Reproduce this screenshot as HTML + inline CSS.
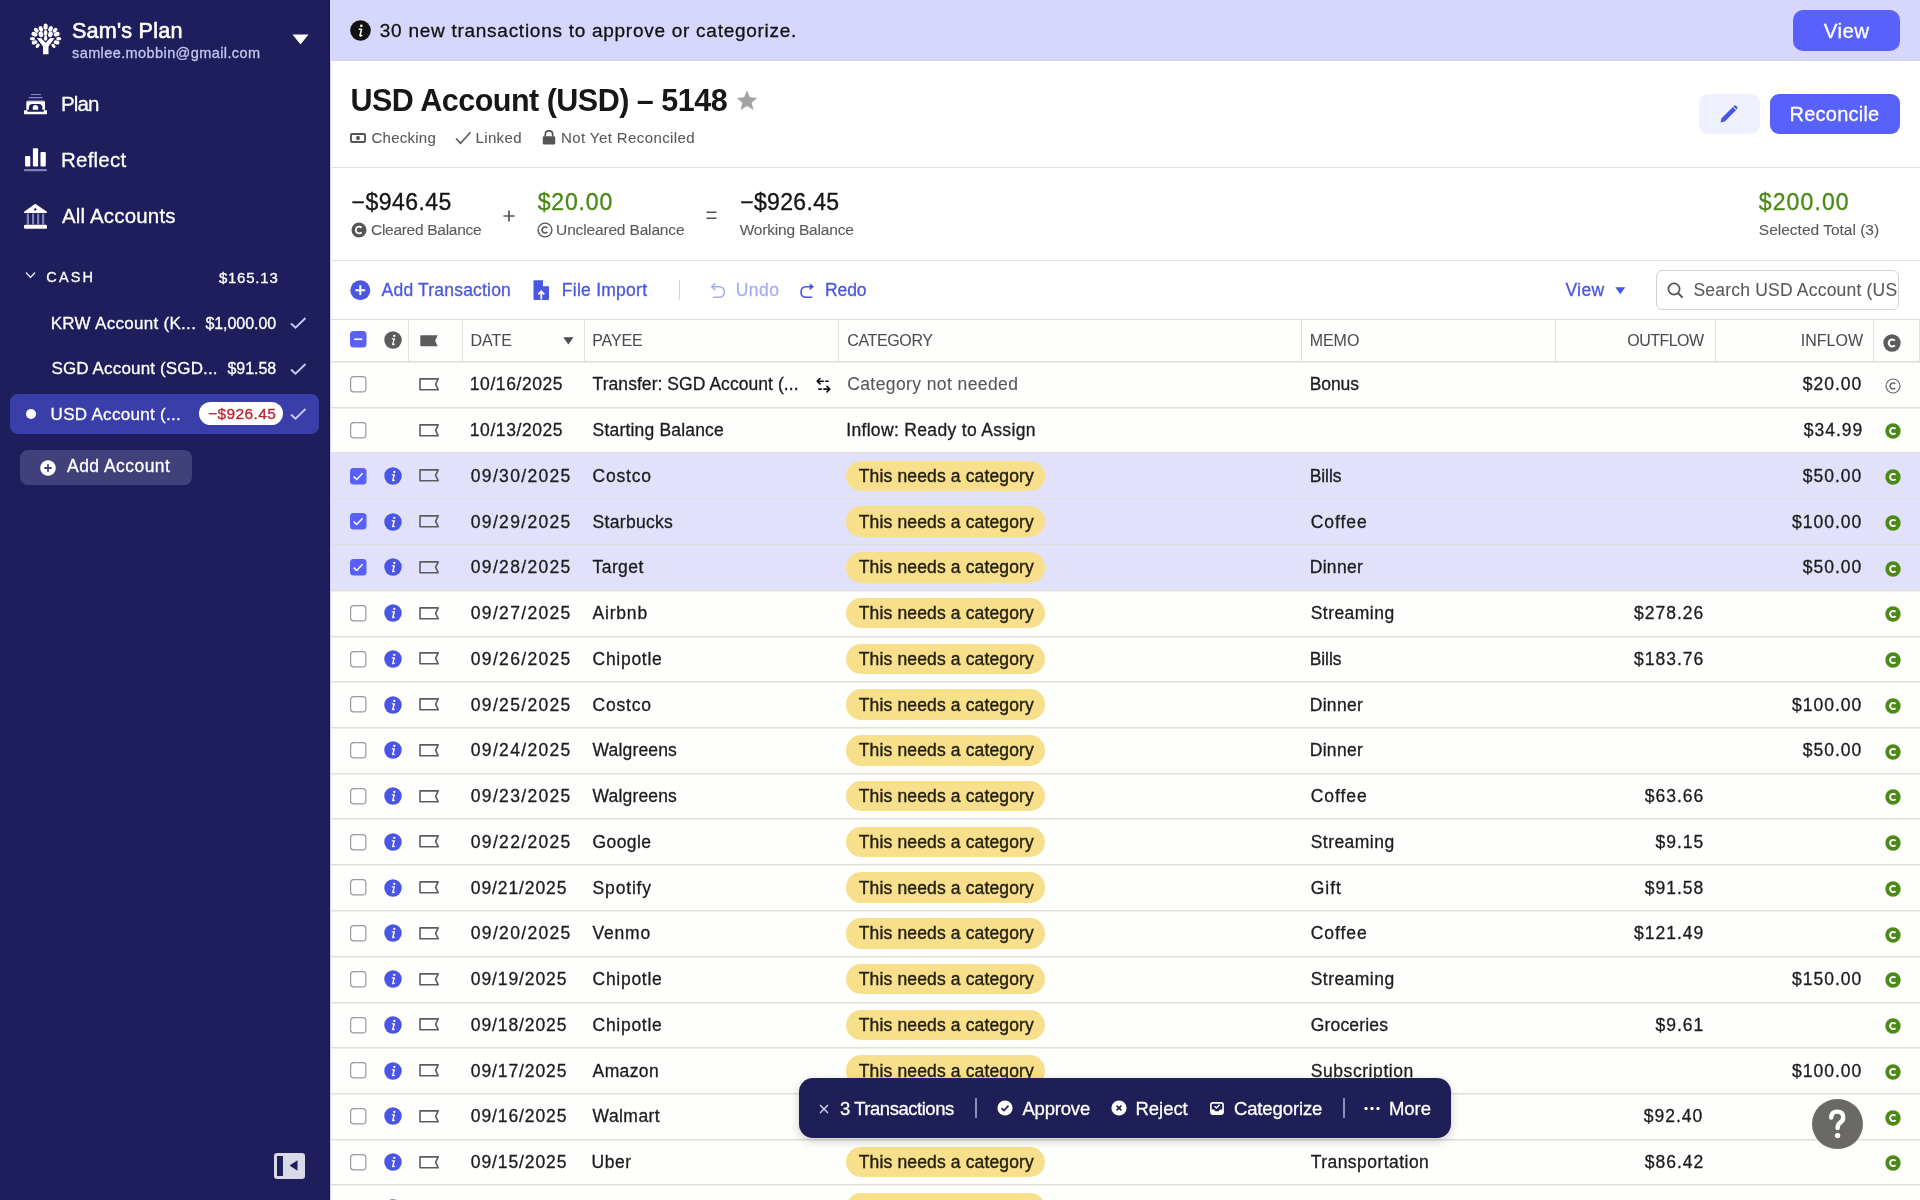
<!DOCTYPE html>
<html><head><meta charset="utf-8"><style>
*{box-sizing:border-box;margin:0;padding:0}
html,body{width:1920px;height:1200px;overflow:hidden;background:#fff;font-family:"Liberation Sans", sans-serif}
.t{position:absolute;white-space:nowrap;line-height:1;-webkit-text-stroke-width:0.3px}
.a{position:absolute}
svg{position:absolute;overflow:visible}

</style></head><body><div id="root" style="position:absolute;left:0;top:0;width:1920px;height:1200px;overflow:hidden;will-change:transform">
<div class="a" style="left:0;top:0;width:330px;height:1200px;background:#1d1e5b"></div><div class="a" style="left:329px;top:0;width:1px;height:1200px;background:#15164a"></div><svg style="left:26px;top:20px" width="40" height="38" viewBox="0 0 40 38"><ellipse cx="19.6" cy="6.6" rx="2.1" ry="3.2" transform="rotate(0 19.6 6.6)" fill="#fff"/><ellipse cx="14.9" cy="8.9" rx="2.0" ry="3.0" transform="rotate(-25 14.9 8.9)" fill="#fff"/><ellipse cx="24.5" cy="8.9" rx="2.0" ry="3.0" transform="rotate(25 24.5 8.9)" fill="#fff"/><ellipse cx="10.3" cy="10.3" rx="1.9" ry="2.8" transform="rotate(-50 10.3 10.3)" fill="#fff"/><ellipse cx="29" cy="10.3" rx="1.9" ry="2.8" transform="rotate(50 29 10.3)" fill="#fff"/><ellipse cx="8.5" cy="14.3" rx="3.1" ry="2.2" transform="rotate(20 8.5 14.3)" fill="#fff"/><ellipse cx="14.9" cy="14.3" rx="2.3" ry="3.0" transform="rotate(-15 14.9 14.3)" fill="#fff"/><ellipse cx="19.6" cy="13" rx="1.8" ry="2.9" transform="rotate(0 19.6 13)" fill="#fff"/><ellipse cx="24.4" cy="14.3" rx="2.3" ry="3.0" transform="rotate(15 24.4 14.3)" fill="#fff"/><ellipse cx="30.7" cy="14.3" rx="3.1" ry="2.2" transform="rotate(-20 30.7 14.3)" fill="#fff"/><ellipse cx="19.6" cy="18.2" rx="1.7" ry="2.6" transform="rotate(0 19.6 18.2)" fill="#fff"/><ellipse cx="6.5" cy="18.7" rx="2.6" ry="1.8" transform="rotate(0 6.5 18.7)" fill="#fff"/><ellipse cx="32.7" cy="18.7" rx="2.6" ry="1.8" transform="rotate(0 32.7 18.7)" fill="#fff"/><ellipse cx="8.6" cy="22.4" rx="2.9" ry="2.0" transform="rotate(-20 8.6 22.4)" fill="#fff"/><ellipse cx="30.6" cy="22.4" rx="2.9" ry="2.0" transform="rotate(20 30.6 22.4)" fill="#fff"/><ellipse cx="11.7" cy="25.8" rx="1.6" ry="2.5" transform="rotate(40 11.7 25.8)" fill="#fff"/><ellipse cx="27.5" cy="25.8" rx="1.6" ry="2.5" transform="rotate(-40 27.5 25.8)" fill="#fff"/><polygon points="10.8,18 15,18 19.6,22.8 24.2,18 28.6,18 22.5,26.5 22.5,34.2 17,34.2 17,26.5" fill="#fff"/></svg><div class="t" style="top:20.11px;font-size:21.6px;color:#fff;letter-spacing:0.208px;left:72.00px;-webkit-text-stroke:0.6px #fff;">Sam&#x27;s Plan</div><div class="t" style="top:45.62px;font-size:14.5px;color:#c5c6ee;letter-spacing:0.407px;left:72.00px;">samlee.mobbin@gmail.com</div><svg style="left:292px;top:34px" width="18" height="11" viewBox="0 0 18 11"><polygon points="0.5,0.5 16.5,0.5 8.5,10.5" fill="#fff"/></svg><svg style="left:20px;top:90px" width="30" height="28" viewBox="0 0 30 28">
      <rect x="10.7" y="3.9" width="10.3" height="1.2" rx="0.6" fill="#8a8bc4"/>
      <rect x="8.6" y="7" width="14" height="1.3" rx="0.6" fill="#8a8bc4"/>
      <defs><linearGradient id="pg" x1="0" y1="0" x2="0" y2="1"><stop offset="0" stop-color="#fff" stop-opacity="0.3"/><stop offset="0.2" stop-color="#fff"/></linearGradient></defs>
      <path d="M6.3 19.8 V12.2 Q6.3 10.2 8.3 10.2 H23 Q25 10.2 25 12.2 V19.8 H22.4 V17.5 Q22.4 14 18.9 14 H12.4 Q8.9 14 8.9 17.5 V19.8 Z" fill="url(#pg)"/>
      <path d="M12.8 19.8 V17.6 A2.7 2.7 0 0 1 18.2 17.6 V19.8 Z" fill="#fff"/>
      <path d="M4 20.3 H7.5 V21.2 Q7.5 21.8 8.1 21.8 H23.2 Q23.8 21.8 23.8 21.2 V20.3 H27 V23.5 Q27 24.3 26.2 24.3 H4.8 Q4 24.3 4 23.5 Z" fill="#fff"/>
    </svg><div class="t" style="top:94.29px;font-size:20.5px;color:#fff;letter-spacing:-0.910px;left:61.00px;">Plan</div><svg style="left:20px;top:146px" width="30" height="28" viewBox="0 0 30 28">
      <rect x="5.1" y="10" width="5.2" height="10.5" rx="0.8" fill="#fff"/>
      <rect x="12.9" y="2.3" width="5.2" height="18.2" rx="0.8" fill="#fff"/>
      <rect x="20.5" y="6.1" width="5.3" height="14.4" rx="0.8" fill="#fff"/>
      <rect x="4" y="22.9" width="23" height="2.3" rx="0.6" fill="#8080b8"/>
    </svg><div class="t" style="top:149.94px;font-size:20.5px;color:#fff;letter-spacing:0.216px;left:61.00px;">Reflect</div><svg style="left:20px;top:201px" width="30" height="30" viewBox="0 0 30 30">
      <path d="M15.25 2.75 L27 10.8 Q27.3 12 26.2 12 H4.8 Q3.7 12 4 10.8 Z" fill="#fff"/>
      <circle cx="15.25" cy="8.4" r="1.2" fill="#1e1f5c"/>
      <rect x="6.75" y="12.5" width="2.25" height="11" fill="#8080b8"/>
      <rect x="12" y="12.5" width="2.1" height="11" fill="#8080b8"/>
      <rect x="17" y="12.5" width="2.25" height="11" fill="#8080b8"/>
      <rect x="22" y="12.5" width="2.25" height="11" fill="#8080b8"/>
      <rect x="4" y="23.75" width="23" height="4" rx="1.2" fill="#fff"/>
    </svg><div class="t" style="top:205.54px;font-size:20.5px;color:#fff;letter-spacing:0.168px;left:62.00px;">All Accounts</div><svg style="left:25px;top:271px" width="12" height="9" viewBox="0 0 12 9"><polyline points="1,1.5 5.5,6.5 10,1.5" fill="none" stroke="#e8e8f8" stroke-width="1.3"/></svg><div class="t" style="top:270.12px;font-size:14.5px;color:#fff;letter-spacing:2.129px;left:46.30px;">CASH</div><div class="t" style="top:270.20px;font-size:15px;color:#fff;letter-spacing:0.770px;left:auto;right:1641.49px;">$165.13</div><div class="t" style="top:314.81px;font-size:17px;color:#fff;letter-spacing:0.295px;left:50.70px;">KRW Account (K...</div><div class="t" style="top:315.65px;font-size:16px;color:#fff;letter-spacing:-0.048px;left:auto;right:1643.85px;">$1,000.00</div><svg style="left:290px;top:317px" width="17" height="12" viewBox="0 0 17 12"><polyline points="1,6.5 5.5,10.8 15.5,1" fill="none" stroke="#c8c9f3" stroke-width="1.9"/></svg><div class="t" style="top:360.31px;font-size:17px;color:#fff;letter-spacing:0.152px;left:51.40px;">SGD Account (SGD...</div><div class="t" style="top:361.15px;font-size:16px;color:#fff;letter-spacing:-0.048px;left:auto;right:1643.85px;">$91.58</div><svg style="left:290px;top:363px" width="17" height="12" viewBox="0 0 17 12"><polyline points="1,6.5 5.5,10.8 15.5,1" fill="none" stroke="#c8c9f3" stroke-width="1.9"/></svg><div class="a" style="left:10px;top:394px;width:309px;height:40px;border-radius:8px;background:#3a3ea8"></div><div class="a" style="left:25.5px;top:409px;width:10px;height:10px;border-radius:50%;background:#fff"></div><div class="t" style="top:405.81px;font-size:17px;color:#fff;letter-spacing:0.302px;left:50.60px;">USD Account (...</div><div class="a" style="left:199px;top:401.8px;width:84px;height:23.2px;border-radius:12px;background:#fff"></div><div class="t" style="top:405.68px;font-size:15.5px;color:#b9262f;letter-spacing:0.391px;left:auto;right:1643.79px;">−$926.45</div><svg style="left:290px;top:408px" width="17" height="12" viewBox="0 0 17 12"><polyline points="1,6.5 5.5,10.8 15.5,1" fill="none" stroke="#c8c9f3" stroke-width="1.9"/></svg><div class="a" style="left:20.3px;top:449.5px;width:172px;height:35px;border-radius:8px;background:#40417a"></div><svg style="left:40px;top:460px" width="16" height="16" viewBox="0 0 16 16"><circle cx="8" cy="8" r="7.8" fill="#fff"/><path d="M8 4.3V11.7M4.3 8H11.7" stroke="#40417a" stroke-width="1.8"/></svg><div class="t" style="top:458.28px;font-size:17.5px;color:#fff;letter-spacing:0.463px;left:67.00px;">Add Account</div><div class="a" style="left:274px;top:1153px;width:31px;height:25.5px;border-radius:3px;background:#d9d9e8"></div><div class="a" style="left:277px;top:1156px;width:6px;height:19.5px;background:#1e1f5c"></div><svg style="left:289px;top:1160px" width="9" height="11" viewBox="0 0 9 11"><polygon points="8.5,0.3 8.5,10.7 0.5,5.5" fill="#1e1f5c"/></svg><div class="a" style="left:330px;top:0;width:1px;height:1200px;background:#d5d5f3"></div><div class="a" style="left:330px;top:0;width:1590px;height:61px;background:#d7d6fc"></div><div class="a" style="left:330px;top:60px;width:1590px;height:1px;background:#d3d2f2"></div><svg style="left:350px;top:20px" width="21" height="21" viewBox="0 0 21 21"><circle cx="10.5" cy="10.5" r="10.3" fill="#111"/><circle cx="11.3" cy="5.8" r="1.3" fill="#fff"/><path d="M9.3 9.2 H11.6 L10 15.3 Q9.9 16 10.6 15.9 L11.7 15.5" fill="none" stroke="#fff" stroke-width="1.5" stroke-linecap="round" stroke-linejoin="round"/></svg><div class="t" style="top:21.41px;font-size:19px;color:#111;letter-spacing:0.730px;left:379.80px;">30 new transactions to approve or categorize.</div><div class="a" style="left:1793px;top:10px;width:107px;height:41px;border-radius:10px;background:#5961fb"></div><div class="t" style="top:20.64px;font-size:20.5px;color:#fff;letter-spacing:0.414px;left:1823.80px;">View</div><div class="t" style="top:84.98px;font-size:30.5px;color:#171717;font-weight:700;letter-spacing:-0.502px;left:350.50px;-webkit-text-stroke-width:0px;">USD Account (USD) – 5148</div><svg style="left:735.2px;top:88.6px" width="24" height="24" viewBox="0 0 24 24"><path d="M12 1.5 L14.9 8.3 L22.2 8.9 L16.7 13.7 L18.4 20.9 L12 17.1 L5.6 20.9 L7.3 13.7 L1.8 8.9 L9.1 8.3 Z" fill="#a3a3a3"/></svg><svg style="left:350px;top:133px" width="16" height="10" viewBox="0 0 16 10"><rect x="1" y="1" width="14" height="8" rx="1" fill="none" stroke="#555" stroke-width="1.9"/><ellipse cx="8" cy="5" rx="1.9" ry="2.2" fill="#555"/></svg><div class="t" style="top:130.00px;font-size:15px;color:#595959;letter-spacing:0.244px;left:371.50px;-webkit-text-stroke-width:0.1px;">Checking</div><svg style="left:455px;top:131px" width="17" height="14" viewBox="0 0 17 14"><polyline points="1,7.5 5.5,12.3 15.5,1.3" fill="none" stroke="#555" stroke-width="1.6"/></svg><div class="t" style="top:130.00px;font-size:15px;color:#595959;letter-spacing:0.368px;left:475.50px;-webkit-text-stroke-width:0.1px;">Linked</div><svg style="left:542px;top:130px" width="14" height="15" viewBox="0 0 14 15"><path d="M3.3 6.5 V4.5 Q3.3 0.9 7 0.9 Q10.7 0.9 10.7 4.5 V6.5" fill="none" stroke="#555" stroke-width="1.7"/><rect x="0.8" y="6.2" width="12.4" height="8.3" rx="1.3" fill="#555"/></svg><div class="t" style="top:130.00px;font-size:15px;color:#595959;letter-spacing:0.407px;left:561.00px;-webkit-text-stroke-width:0.1px;">Not Yet Reconciled</div><div class="a" style="left:1698.5px;top:94px;width:61px;height:40px;border-radius:9px;background:#eff0fd"></div><svg style="left:1718px;top:103px" width="22" height="22" viewBox="0 0 22 22"><path d="M2.5 19.5 L3.6 15.2 L14.8 4 L18 7.2 L6.8 18.4 Z" fill="#4a56e2"/><path d="M16 2.8 Q17 1.8 18 2.8 L19.2 4 Q20.2 5 19.2 6 L18.6 6.6 L15.4 3.4 Z" fill="#4a56e2"/></svg><div class="a" style="left:1769.5px;top:94px;width:130.5px;height:40px;border-radius:9px;background:#5961fb"></div><div class="t" style="top:104.27px;font-size:20px;color:#fff;letter-spacing:0.238px;left:1789.50px;">Reconcile</div><div class="a" style="left:332px;top:167px;width:1588px;height:1px;background:#e2e1da"></div><div class="t" style="top:191.33px;font-size:23px;color:#171717;letter-spacing:0.460px;left:351.60px;-webkit-text-stroke:0.35px #171717;">−$946.45</div><svg style="left:350.5px;top:221.5px" width="16" height="16" viewBox="0 0 16 16"><circle cx="8" cy="8" r="7.5" fill="#555"/><path d="M10.6 5.6 A3.4 3.4 0 1 0 10.6 10.4" fill="none" stroke="#fff" stroke-width="1.9"/></svg><div class="t" style="top:221.78px;font-size:15.5px;color:#595959;letter-spacing:-0.284px;left:371.00px;-webkit-text-stroke-width:0.1px;">Cleared Balance</div><svg style="left:503px;top:210px" width="12" height="12" viewBox="0 0 12 12"><path d="M6 0.5V11.5M0.5 6H11.5" stroke="#555" stroke-width="1.7"/></svg><div class="t" style="top:191.33px;font-size:23px;color:#4b8a17;letter-spacing:0.849px;left:537.70px;-webkit-text-stroke:0.35px #4b8a17;">$20.00</div><svg style="left:536.5px;top:221.5px" width="16" height="16" viewBox="0 0 16 16"><circle cx="8" cy="8" r="6.9" fill="none" stroke="#555" stroke-width="1.4"/><path d="M10.3 6 A3 3 0 1 0 10.3 10" fill="none" stroke="#555" stroke-width="1.6"/></svg><div class="t" style="top:221.78px;font-size:15.5px;color:#595959;letter-spacing:-0.159px;left:556.10px;-webkit-text-stroke-width:0.1px;">Uncleared Balance</div><svg style="left:706px;top:210px" width="11" height="11" viewBox="0 0 11 11"><path d="M0.5 2.3H10.5M0.5 8.3H10.5" stroke="#555" stroke-width="1.6"/></svg><div class="t" style="top:191.33px;font-size:23px;color:#171717;letter-spacing:0.332px;left:740.20px;-webkit-text-stroke:0.35px #171717;">−$926.45</div><div class="t" style="top:221.78px;font-size:15.5px;color:#595959;letter-spacing:-0.198px;left:739.70px;-webkit-text-stroke-width:0.1px;">Working Balance</div><div class="t" style="top:191.23px;font-size:23px;color:#4b8a17;letter-spacing:1.109px;left:1758.80px;-webkit-text-stroke:0.35px #4b8a17;">$200.00</div><div class="t" style="top:221.88px;font-size:15.5px;color:#595959;left:1758.80px;-webkit-text-stroke-width:0.1px;">Selected Total (3)</div><div class="a" style="left:332px;top:260px;width:1588px;height:1px;background:#e2e1da"></div><svg style="left:350px;top:280px" width="21" height="21" viewBox="0 0 21 21"><circle cx="10.3" cy="10.2" r="10" fill="#4a56e2"/><path d="M10.3 5.3V15.1M5.4 10.2H15.2" stroke="#fff" stroke-width="2"/></svg><div class="t" style="top:282.18px;font-size:17.5px;color:#4a56e2;letter-spacing:0.197px;left:381.60px;">Add Transaction</div><svg style="left:533px;top:280px" width="17" height="21" viewBox="0 0 17 21"><path d="M1.5 0.3 H10 L16 6.3 V19 Q16 20 15 20 H1.5 Q0.5 20 0.5 19 V1.3 Q0.5 0.3 1.5 0.3 Z" fill="#4a56e2"/><path d="M10 0.3 V6.3 H16" fill="#fff" stroke="#fff" stroke-width="0"/><path d="M10.2 0.8 L15.5 6.1 H10.2 Z" fill="#fff"/><path d="M8.3 19.5 V11.5 M5.3 14.3 L8.3 11.2 L11.3 14.3" fill="none" stroke="#fff" stroke-width="1.8"/></svg><div class="t" style="top:282.18px;font-size:17.5px;color:#4a56e2;letter-spacing:0.261px;left:561.80px;">File Import</div><div class="a" style="left:679px;top:280px;width:1px;height:20px;background:#d5d4ce"></div><svg style="left:710px;top:282px" width="16" height="17" viewBox="0 0 16 17"><path d="M3 15.3 H9 Q14.3 15.3 14.3 10 Q14.3 4.7 9 4.7 H2.3" fill="none" stroke="#a8aef0" stroke-width="1.6"/><path d="M5.3 1.3 L1.8 4.7 L5.3 8.1" fill="none" stroke="#a8aef0" stroke-width="1.6"/></svg><div class="t" style="top:281.88px;font-size:17.5px;color:#a8aef0;letter-spacing:0.499px;left:735.70px;">Undo</div><svg style="left:799px;top:282px" width="17" height="17" viewBox="0 0 17 17"><path d="M13.3 15.3 H7.3 Q2 15.3 2 10 Q2 4.7 7.3 4.7 H12" fill="none" stroke="#4a56e2" stroke-width="1.6"/><path d="M10.7 1.2 L15 4.7 L10.7 8.2 Z" fill="#4a56e2"/></svg><div class="t" style="top:281.88px;font-size:17.5px;color:#4a56e2;letter-spacing:-0.068px;left:824.90px;">Redo</div><div class="t" style="top:282.28px;font-size:17.5px;color:#4a56e2;letter-spacing:0.374px;left:1565.40px;">View</div><svg style="left:1615px;top:286.5px" width="11" height="8" viewBox="0 0 11 8"><polygon points="0.3,0.3 10.3,0.3 5.3,7.3" fill="#4a56e2"/></svg><div class="a" style="left:1656.4px;top:270.3px;width:243px;height:39.5px;border:1px solid #d3d2cc;border-radius:6px;background:#fff;overflow:hidden"></div><svg style="left:1667px;top:282px" width="18" height="17" viewBox="0 0 18 17"><circle cx="7" cy="7" r="5.6" fill="none" stroke="#555" stroke-width="1.7"/><path d="M11 11 L15.6 15.6" stroke="#555" stroke-width="2"/></svg><div class="a" style="left:1680px;top:272px;width:218px;height:36px;overflow:hidden"><div class="t" style="top:10.28px;font-size:17.5px;color:#5a5a5a;letter-spacing:0.200px;left:13.50px;-webkit-text-stroke-width:0.1px;">Search USD Account (USD)</div></div><div class="a" style="left:331px;top:320px;width:1589px;height:880px;background:#fefefd"></div><div class="a" style="left:331px;top:319px;width:1589px;height:1px;background:#dedcd4"></div><div class="a" style="left:331px;top:361px;width:1589px;height:1px;background:#dfded7"></div><div class="a" style="left:331px;top:362px;width:1589px;height:1px;background:#efeee9"></div><div class="a" style="left:408px;top:320px;width:1px;height:41px;background:#e2e1da"></div><div class="a" style="left:462px;top:320px;width:1px;height:41px;background:#e2e1da"></div><div class="a" style="left:584px;top:320px;width:1px;height:41px;background:#e2e1da"></div><div class="a" style="left:838px;top:320px;width:1px;height:41px;background:#e2e1da"></div><div class="a" style="left:1301px;top:320px;width:1px;height:41px;background:#e2e1da"></div><div class="a" style="left:1555px;top:320px;width:1px;height:41px;background:#e2e1da"></div><div class="a" style="left:1715px;top:320px;width:1px;height:41px;background:#e2e1da"></div><div class="a" style="left:1873px;top:320px;width:1px;height:41px;background:#e2e1da"></div><div class="a" style="left:1919px;top:320px;width:1px;height:41px;background:#e2e1da"></div><svg style="left:350px;top:331px" width="16.5" height="16.5" viewBox="0 0 16.5 16.5"><rect x="0" y="0" width="16.5" height="16.5" rx="3.5" fill="#5960f7"/><path d="M4.2 8.25 H12.3" stroke="#fff" stroke-width="1.6"/></svg><svg style="left:384px;top:331px" width="18" height="18" viewBox="0 0 18 18"><circle cx="9" cy="9" r="8.75" fill="#5c5c5c"/><circle cx="10.3" cy="4.9" r="1.15" fill="#fff"/><path d="M8.3 7.8 H10.4 L8.7 13.1 Q8.6 13.7 9.2 13.6 L10.2 13.3" fill="none" stroke="#fff" stroke-width="1.35" stroke-linecap="round" stroke-linejoin="round"/></svg><svg style="left:419.5px;top:334.5px" width="20" height="13" viewBox="0 0 20 13"><path d="M0.3 1 Q0.3 0.3 1 0.3 H17.7 L15.2 5.8 L17.7 11.3 H1 Q0.3 11.3 0.3 10.6 Z" fill="#5c5c5c"/></svg><div class="t" style="top:332.65px;font-size:16px;color:#4d4d4d;letter-spacing:0.013px;left:470.40px;-webkit-text-stroke-width:0.05px;">DATE</div><svg style="left:562.5px;top:337px" width="11" height="8" viewBox="0 0 11 8"><polygon points="0.3,0.3 10.5,0.3 5.4,7.5" fill="#4d4d4d"/></svg><div class="t" style="top:332.65px;font-size:16px;color:#4d4d4d;letter-spacing:-0.178px;left:592.30px;-webkit-text-stroke-width:0.05px;">PAYEE</div><div class="t" style="top:332.65px;font-size:16px;color:#4d4d4d;letter-spacing:-0.363px;left:847.20px;-webkit-text-stroke-width:0.05px;">CATEGORY</div><div class="t" style="top:332.65px;font-size:16px;color:#4d4d4d;letter-spacing:-0.043px;left:1309.70px;-webkit-text-stroke-width:0.05px;">MEMO</div><div class="t" style="top:332.65px;font-size:16px;color:#4d4d4d;letter-spacing:-0.532px;left:auto;right:216.43px;-webkit-text-stroke-width:0.05px;">OUTFLOW</div><div class="t" style="top:332.65px;font-size:16px;color:#4d4d4d;letter-spacing:0.017px;left:auto;right:56.88px;-webkit-text-stroke-width:0.05px;">INFLOW</div><svg style="left:1883.3px;top:333.6px" width="18" height="18" viewBox="0 0 16 16"><circle cx="8" cy="8" r="7.7" fill="#5c5c5c"/><path d="M10.5 5.9 A3.1 3.1 0 1 0 10.5 10.1" fill="none" stroke="#fff" stroke-width="1.9"/></svg><div class="a" style="left:331px;top:407px;width:1589px;height:1px;background:#dfded7"></div><div class="a" style="left:331px;top:408px;width:1589px;height:1px;background:#efeee9"></div><svg style="left:350px;top:376.12px" width="16.5" height="16.5" viewBox="0 0 16.5 16.5"><rect x="0.6" y="0.6" width="15.3" height="15.3" rx="3.2" fill="#fff" stroke="#9a9a9a" stroke-width="1.2"/></svg><svg style="left:418.5px;top:377.88px" width="21" height="13" viewBox="0 0 21 13"><path d="M1 0.9 H19.2 L16.6 6.3 L19.2 11.7 H1 Z" fill="none" stroke="#5c5c5c" stroke-width="1.6" stroke-linejoin="round"/></svg><div class="t" style="top:376.28px;font-size:17.5px;color:#1c1c1c;letter-spacing:0.572px;left:469.80px;">10/16/2025</div><div class="t" style="top:376.28px;font-size:17.5px;color:#1c1c1c;letter-spacing:0.054px;left:592.60px;">Transfer: SGD Account (...</div><div class="t" style="top:376.28px;font-size:17.5px;color:#585858;letter-spacing:0.404px;left:847.20px;-webkit-text-stroke-width:0.1px;">Category not needed</div><svg style="left:815px;top:376.50px" width="17" height="17" viewBox="0 0 17 17"><path d="M5 1.5 L2.3 4.2 L5 6.9" fill="none" stroke="#111" stroke-width="1.7" stroke-linecap="round" stroke-linejoin="round"/><path d="M2.6 4.2 H8.3 M10.6 4.2 H13.2" fill="none" stroke="#111" stroke-width="1.6" stroke-linecap="round"/><path d="M12 9.4 L14.7 12.1 L12 14.8" fill="none" stroke="#111" stroke-width="1.7" stroke-linecap="round" stroke-linejoin="round"/><path d="M14.4 12.1 H8.8 M6.4 12.1 H3.8" fill="none" stroke="#111" stroke-width="1.6" stroke-linecap="round"/></svg><div class="t" style="top:376.28px;font-size:17.5px;color:#1c1c1c;letter-spacing:-0.068px;left:1309.70px;">Bonus</div><div class="t" style="top:376.28px;font-size:17.5px;color:#1c1c1c;letter-spacing:1.000px;left:auto;right:57.77px;">$20.00</div><svg style="left:1884.5px;top:377.575px" width="16" height="16" viewBox="0 0 16 16"><circle cx="8" cy="8" r="7" fill="none" stroke="#6a6a6a" stroke-width="1.2"/><path d="M10.2 6.1 A2.9 2.9 0 1 0 10.2 9.9" fill="none" stroke="#6a6a6a" stroke-width="1.5"/></svg><div class="a" style="left:331px;top:452px;width:1589px;height:1px;background:#dfded7"></div><div class="a" style="left:331px;top:453px;width:1589px;height:1px;background:#efeee9"></div><svg style="left:350px;top:421.88px" width="16.5" height="16.5" viewBox="0 0 16.5 16.5"><rect x="0.6" y="0.6" width="15.3" height="15.3" rx="3.2" fill="#fff" stroke="#9a9a9a" stroke-width="1.2"/></svg><svg style="left:418.5px;top:423.62px" width="21" height="13" viewBox="0 0 21 13"><path d="M1 0.9 H19.2 L16.6 6.3 L19.2 11.7 H1 Z" fill="none" stroke="#5c5c5c" stroke-width="1.6" stroke-linejoin="round"/></svg><div class="t" style="top:422.03px;font-size:17.5px;color:#1c1c1c;letter-spacing:0.572px;left:469.80px;">10/13/2025</div><div class="t" style="top:422.03px;font-size:17.5px;color:#1c1c1c;letter-spacing:0.181px;left:592.60px;">Starting Balance</div><div class="t" style="top:422.03px;font-size:17.5px;color:#1c1c1c;letter-spacing:0.335px;left:846.20px;">Inflow: Ready to Assign</div><div class="t" style="top:422.03px;font-size:17.5px;color:#1c1c1c;letter-spacing:1.000px;left:auto;right:56.77px;">$34.99</div><svg style="left:1884.5px;top:423.325px" width="16" height="16" viewBox="0 0 16 16"><circle cx="8" cy="8" r="7.7" fill="#4b8a17"/><path d="M10.5 5.9 A3.1 3.1 0 1 0 10.5 10.1" fill="none" stroke="#fff" stroke-width="1.9"/></svg><div class="a" style="left:331px;top:453.00px;width:1589px;height:45.75px;background:#e1e1fb"></div><div class="a" style="left:331px;top:498px;width:1589px;height:1px;background:#dfded7"></div><div class="a" style="left:331px;top:499px;width:1589px;height:1px;background:#efeee9"></div><svg style="left:350px;top:467.62px" width="16.5" height="16.5" viewBox="0 0 16.5 16.5"><rect x="0" y="0" width="16.5" height="16.5" rx="3.5" fill="#5960f7"/><polyline points="3.7,8.6 6.7,11.5 12.6,5.3" fill="none" stroke="#fff" stroke-width="1.5"/></svg><svg style="left:383.5px;top:466.88px" width="18" height="18" viewBox="0 0 18 18"><circle cx="9" cy="9" r="8.75" fill="#4a55e6"/><circle cx="10.3" cy="4.9" r="1.15" fill="#fff"/><path d="M8.3 7.8 H10.4 L8.7 13.1 Q8.6 13.7 9.2 13.6 L10.2 13.3" fill="none" stroke="#fff" stroke-width="1.35" stroke-linecap="round" stroke-linejoin="round"/></svg><svg style="left:418.5px;top:469.38px" width="21" height="13" viewBox="0 0 21 13"><path d="M1 0.9 H19.2 L16.6 6.3 L19.2 11.7 H1 Z" fill="none" stroke="#5c5c5c" stroke-width="1.6" stroke-linejoin="round"/></svg><div class="t" style="top:467.78px;font-size:17.5px;color:#1c1c1c;letter-spacing:1.327px;left:470.80px;">09/30/2025</div><div class="t" style="top:467.78px;font-size:17.5px;color:#1c1c1c;letter-spacing:0.793px;left:592.60px;">Costco</div><div class="a" style="left:846.3px;top:460.57px;width:199px;height:30.6px;border-radius:15.3px;background:#f8df8b"></div><div class="t" style="top:467.78px;font-size:17.5px;color:#221f0e;letter-spacing:0.138px;left:858.80px;-webkit-text-stroke-width:0.4px;">This needs a category</div><div class="t" style="top:467.78px;font-size:17.5px;color:#1c1c1c;letter-spacing:-0.084px;left:1309.70px;">Bills</div><div class="t" style="top:467.78px;font-size:17.5px;color:#1c1c1c;letter-spacing:1.000px;left:auto;right:57.77px;">$50.00</div><svg style="left:1884.5px;top:469.075px" width="16" height="16" viewBox="0 0 16 16"><circle cx="8" cy="8" r="7.7" fill="#4b8a17"/><path d="M10.5 5.9 A3.1 3.1 0 1 0 10.5 10.1" fill="none" stroke="#fff" stroke-width="1.9"/></svg><div class="a" style="left:331px;top:498.75px;width:1589px;height:45.75px;background:#e1e1fb"></div><div class="a" style="left:331px;top:544px;width:1589px;height:1px;background:#dfded7"></div><div class="a" style="left:331px;top:545px;width:1589px;height:1px;background:#efeee9"></div><svg style="left:350px;top:513.38px" width="16.5" height="16.5" viewBox="0 0 16.5 16.5"><rect x="0" y="0" width="16.5" height="16.5" rx="3.5" fill="#5960f7"/><polyline points="3.7,8.6 6.7,11.5 12.6,5.3" fill="none" stroke="#fff" stroke-width="1.5"/></svg><svg style="left:383.5px;top:512.62px" width="18" height="18" viewBox="0 0 18 18"><circle cx="9" cy="9" r="8.75" fill="#4a55e6"/><circle cx="10.3" cy="4.9" r="1.15" fill="#fff"/><path d="M8.3 7.8 H10.4 L8.7 13.1 Q8.6 13.7 9.2 13.6 L10.2 13.3" fill="none" stroke="#fff" stroke-width="1.35" stroke-linecap="round" stroke-linejoin="round"/></svg><svg style="left:418.5px;top:515.12px" width="21" height="13" viewBox="0 0 21 13"><path d="M1 0.9 H19.2 L16.6 6.3 L19.2 11.7 H1 Z" fill="none" stroke="#5c5c5c" stroke-width="1.6" stroke-linejoin="round"/></svg><div class="t" style="top:513.53px;font-size:17.5px;color:#1c1c1c;letter-spacing:1.327px;left:470.80px;">09/29/2025</div><div class="t" style="top:513.53px;font-size:17.5px;color:#1c1c1c;letter-spacing:0.305px;left:592.60px;">Starbucks</div><div class="a" style="left:846.3px;top:506.32px;width:199px;height:30.6px;border-radius:15.3px;background:#f8df8b"></div><div class="t" style="top:513.53px;font-size:17.5px;color:#221f0e;letter-spacing:0.138px;left:858.80px;-webkit-text-stroke-width:0.4px;">This needs a category</div><div class="t" style="top:513.53px;font-size:17.5px;color:#1c1c1c;letter-spacing:0.958px;left:1310.70px;">Coffee</div><div class="t" style="top:513.53px;font-size:17.5px;color:#1c1c1c;letter-spacing:1.000px;left:auto;right:57.77px;">$100.00</div><svg style="left:1884.5px;top:514.825px" width="16" height="16" viewBox="0 0 16 16"><circle cx="8" cy="8" r="7.7" fill="#4b8a17"/><path d="M10.5 5.9 A3.1 3.1 0 1 0 10.5 10.1" fill="none" stroke="#fff" stroke-width="1.9"/></svg><div class="a" style="left:331px;top:544.50px;width:1589px;height:45.75px;background:#e1e1fb"></div><div class="a" style="left:331px;top:590px;width:1589px;height:1px;background:#dfded7"></div><div class="a" style="left:331px;top:591px;width:1589px;height:1px;background:#efeee9"></div><svg style="left:350px;top:559.12px" width="16.5" height="16.5" viewBox="0 0 16.5 16.5"><rect x="0" y="0" width="16.5" height="16.5" rx="3.5" fill="#5960f7"/><polyline points="3.7,8.6 6.7,11.5 12.6,5.3" fill="none" stroke="#fff" stroke-width="1.5"/></svg><svg style="left:383.5px;top:558.38px" width="18" height="18" viewBox="0 0 18 18"><circle cx="9" cy="9" r="8.75" fill="#4a55e6"/><circle cx="10.3" cy="4.9" r="1.15" fill="#fff"/><path d="M8.3 7.8 H10.4 L8.7 13.1 Q8.6 13.7 9.2 13.6 L10.2 13.3" fill="none" stroke="#fff" stroke-width="1.35" stroke-linecap="round" stroke-linejoin="round"/></svg><svg style="left:418.5px;top:560.88px" width="21" height="13" viewBox="0 0 21 13"><path d="M1 0.9 H19.2 L16.6 6.3 L19.2 11.7 H1 Z" fill="none" stroke="#5c5c5c" stroke-width="1.6" stroke-linejoin="round"/></svg><div class="t" style="top:559.28px;font-size:17.5px;color:#1c1c1c;letter-spacing:1.327px;left:470.80px;">09/28/2025</div><div class="t" style="top:559.28px;font-size:17.5px;color:#1c1c1c;letter-spacing:0.405px;left:592.60px;">Target</div><div class="a" style="left:846.3px;top:552.08px;width:199px;height:30.6px;border-radius:15.3px;background:#f8df8b"></div><div class="t" style="top:559.28px;font-size:17.5px;color:#221f0e;letter-spacing:0.138px;left:858.80px;-webkit-text-stroke-width:0.4px;">This needs a category</div><div class="t" style="top:559.28px;font-size:17.5px;color:#1c1c1c;letter-spacing:0.315px;left:1309.70px;">Dinner</div><div class="t" style="top:559.28px;font-size:17.5px;color:#1c1c1c;letter-spacing:1.000px;left:auto;right:57.77px;">$50.00</div><svg style="left:1884.5px;top:560.575px" width="16" height="16" viewBox="0 0 16 16"><circle cx="8" cy="8" r="7.7" fill="#4b8a17"/><path d="M10.5 5.9 A3.1 3.1 0 1 0 10.5 10.1" fill="none" stroke="#fff" stroke-width="1.9"/></svg><div class="a" style="left:331px;top:636px;width:1589px;height:1px;background:#dfded7"></div><div class="a" style="left:331px;top:637px;width:1589px;height:1px;background:#efeee9"></div><svg style="left:350px;top:604.88px" width="16.5" height="16.5" viewBox="0 0 16.5 16.5"><rect x="0.6" y="0.6" width="15.3" height="15.3" rx="3.2" fill="#fff" stroke="#9a9a9a" stroke-width="1.2"/></svg><svg style="left:383.5px;top:604.12px" width="18" height="18" viewBox="0 0 18 18"><circle cx="9" cy="9" r="8.75" fill="#4a55e6"/><circle cx="10.3" cy="4.9" r="1.15" fill="#fff"/><path d="M8.3 7.8 H10.4 L8.7 13.1 Q8.6 13.7 9.2 13.6 L10.2 13.3" fill="none" stroke="#fff" stroke-width="1.35" stroke-linecap="round" stroke-linejoin="round"/></svg><svg style="left:418.5px;top:606.62px" width="21" height="13" viewBox="0 0 21 13"><path d="M1 0.9 H19.2 L16.6 6.3 L19.2 11.7 H1 Z" fill="none" stroke="#5c5c5c" stroke-width="1.6" stroke-linejoin="round"/></svg><div class="t" style="top:605.03px;font-size:17.5px;color:#1c1c1c;letter-spacing:1.327px;left:470.80px;">09/27/2025</div><div class="t" style="top:605.03px;font-size:17.5px;color:#1c1c1c;letter-spacing:0.789px;left:592.60px;">Airbnb</div><div class="a" style="left:846.3px;top:597.83px;width:199px;height:30.6px;border-radius:15.3px;background:#f8df8b"></div><div class="t" style="top:605.03px;font-size:17.5px;color:#221f0e;letter-spacing:0.138px;left:858.80px;-webkit-text-stroke-width:0.4px;">This needs a category</div><div class="t" style="top:605.03px;font-size:17.5px;color:#1c1c1c;letter-spacing:0.459px;left:1310.70px;">Streaming</div><div class="t" style="top:605.03px;font-size:17.5px;color:#1c1c1c;letter-spacing:1.000px;left:auto;right:215.77px;">$278.26</div><svg style="left:1884.5px;top:606.325px" width="16" height="16" viewBox="0 0 16 16"><circle cx="8" cy="8" r="7.7" fill="#4b8a17"/><path d="M10.5 5.9 A3.1 3.1 0 1 0 10.5 10.1" fill="none" stroke="#fff" stroke-width="1.9"/></svg><div class="a" style="left:331px;top:681px;width:1589px;height:1px;background:#dfded7"></div><div class="a" style="left:331px;top:682px;width:1589px;height:1px;background:#efeee9"></div><svg style="left:350px;top:650.62px" width="16.5" height="16.5" viewBox="0 0 16.5 16.5"><rect x="0.6" y="0.6" width="15.3" height="15.3" rx="3.2" fill="#fff" stroke="#9a9a9a" stroke-width="1.2"/></svg><svg style="left:383.5px;top:649.88px" width="18" height="18" viewBox="0 0 18 18"><circle cx="9" cy="9" r="8.75" fill="#4a55e6"/><circle cx="10.3" cy="4.9" r="1.15" fill="#fff"/><path d="M8.3 7.8 H10.4 L8.7 13.1 Q8.6 13.7 9.2 13.6 L10.2 13.3" fill="none" stroke="#fff" stroke-width="1.35" stroke-linecap="round" stroke-linejoin="round"/></svg><svg style="left:418.5px;top:652.38px" width="21" height="13" viewBox="0 0 21 13"><path d="M1 0.9 H19.2 L16.6 6.3 L19.2 11.7 H1 Z" fill="none" stroke="#5c5c5c" stroke-width="1.6" stroke-linejoin="round"/></svg><div class="t" style="top:650.78px;font-size:17.5px;color:#1c1c1c;letter-spacing:1.327px;left:470.80px;">09/26/2025</div><div class="t" style="top:650.78px;font-size:17.5px;color:#1c1c1c;letter-spacing:0.704px;left:592.60px;">Chipotle</div><div class="a" style="left:846.3px;top:643.58px;width:199px;height:30.6px;border-radius:15.3px;background:#f8df8b"></div><div class="t" style="top:650.78px;font-size:17.5px;color:#221f0e;letter-spacing:0.138px;left:858.80px;-webkit-text-stroke-width:0.4px;">This needs a category</div><div class="t" style="top:650.78px;font-size:17.5px;color:#1c1c1c;letter-spacing:-0.084px;left:1309.70px;">Bills</div><div class="t" style="top:650.78px;font-size:17.5px;color:#1c1c1c;letter-spacing:1.000px;left:auto;right:215.77px;">$183.76</div><svg style="left:1884.5px;top:652.075px" width="16" height="16" viewBox="0 0 16 16"><circle cx="8" cy="8" r="7.7" fill="#4b8a17"/><path d="M10.5 5.9 A3.1 3.1 0 1 0 10.5 10.1" fill="none" stroke="#fff" stroke-width="1.9"/></svg><div class="a" style="left:331px;top:727px;width:1589px;height:1px;background:#dfded7"></div><div class="a" style="left:331px;top:728px;width:1589px;height:1px;background:#efeee9"></div><svg style="left:350px;top:696.38px" width="16.5" height="16.5" viewBox="0 0 16.5 16.5"><rect x="0.6" y="0.6" width="15.3" height="15.3" rx="3.2" fill="#fff" stroke="#9a9a9a" stroke-width="1.2"/></svg><svg style="left:383.5px;top:695.62px" width="18" height="18" viewBox="0 0 18 18"><circle cx="9" cy="9" r="8.75" fill="#4a55e6"/><circle cx="10.3" cy="4.9" r="1.15" fill="#fff"/><path d="M8.3 7.8 H10.4 L8.7 13.1 Q8.6 13.7 9.2 13.6 L10.2 13.3" fill="none" stroke="#fff" stroke-width="1.35" stroke-linecap="round" stroke-linejoin="round"/></svg><svg style="left:418.5px;top:698.12px" width="21" height="13" viewBox="0 0 21 13"><path d="M1 0.9 H19.2 L16.6 6.3 L19.2 11.7 H1 Z" fill="none" stroke="#5c5c5c" stroke-width="1.6" stroke-linejoin="round"/></svg><div class="t" style="top:696.53px;font-size:17.5px;color:#1c1c1c;letter-spacing:1.327px;left:470.80px;">09/25/2025</div><div class="t" style="top:696.53px;font-size:17.5px;color:#1c1c1c;letter-spacing:0.793px;left:592.60px;">Costco</div><div class="a" style="left:846.3px;top:689.33px;width:199px;height:30.6px;border-radius:15.3px;background:#f8df8b"></div><div class="t" style="top:696.53px;font-size:17.5px;color:#221f0e;letter-spacing:0.138px;left:858.80px;-webkit-text-stroke-width:0.4px;">This needs a category</div><div class="t" style="top:696.53px;font-size:17.5px;color:#1c1c1c;letter-spacing:0.315px;left:1309.70px;">Dinner</div><div class="t" style="top:696.53px;font-size:17.5px;color:#1c1c1c;letter-spacing:1.000px;left:auto;right:57.77px;">$100.00</div><svg style="left:1884.5px;top:697.825px" width="16" height="16" viewBox="0 0 16 16"><circle cx="8" cy="8" r="7.7" fill="#4b8a17"/><path d="M10.5 5.9 A3.1 3.1 0 1 0 10.5 10.1" fill="none" stroke="#fff" stroke-width="1.9"/></svg><div class="a" style="left:331px;top:773px;width:1589px;height:1px;background:#dfded7"></div><div class="a" style="left:331px;top:774px;width:1589px;height:1px;background:#efeee9"></div><svg style="left:350px;top:742.12px" width="16.5" height="16.5" viewBox="0 0 16.5 16.5"><rect x="0.6" y="0.6" width="15.3" height="15.3" rx="3.2" fill="#fff" stroke="#9a9a9a" stroke-width="1.2"/></svg><svg style="left:383.5px;top:741.38px" width="18" height="18" viewBox="0 0 18 18"><circle cx="9" cy="9" r="8.75" fill="#4a55e6"/><circle cx="10.3" cy="4.9" r="1.15" fill="#fff"/><path d="M8.3 7.8 H10.4 L8.7 13.1 Q8.6 13.7 9.2 13.6 L10.2 13.3" fill="none" stroke="#fff" stroke-width="1.35" stroke-linecap="round" stroke-linejoin="round"/></svg><svg style="left:418.5px;top:743.88px" width="21" height="13" viewBox="0 0 21 13"><path d="M1 0.9 H19.2 L16.6 6.3 L19.2 11.7 H1 Z" fill="none" stroke="#5c5c5c" stroke-width="1.6" stroke-linejoin="round"/></svg><div class="t" style="top:742.28px;font-size:17.5px;color:#1c1c1c;letter-spacing:1.327px;left:470.80px;">09/24/2025</div><div class="t" style="top:742.28px;font-size:17.5px;color:#1c1c1c;letter-spacing:0.157px;left:592.60px;">Walgreens</div><div class="a" style="left:846.3px;top:735.08px;width:199px;height:30.6px;border-radius:15.3px;background:#f8df8b"></div><div class="t" style="top:742.28px;font-size:17.5px;color:#221f0e;letter-spacing:0.138px;left:858.80px;-webkit-text-stroke-width:0.4px;">This needs a category</div><div class="t" style="top:742.28px;font-size:17.5px;color:#1c1c1c;letter-spacing:0.315px;left:1309.70px;">Dinner</div><div class="t" style="top:742.28px;font-size:17.5px;color:#1c1c1c;letter-spacing:1.000px;left:auto;right:57.77px;">$50.00</div><svg style="left:1884.5px;top:743.575px" width="16" height="16" viewBox="0 0 16 16"><circle cx="8" cy="8" r="7.7" fill="#4b8a17"/><path d="M10.5 5.9 A3.1 3.1 0 1 0 10.5 10.1" fill="none" stroke="#fff" stroke-width="1.9"/></svg><div class="a" style="left:331px;top:818px;width:1589px;height:1px;background:#dfded7"></div><div class="a" style="left:331px;top:819px;width:1589px;height:1px;background:#efeee9"></div><svg style="left:350px;top:787.88px" width="16.5" height="16.5" viewBox="0 0 16.5 16.5"><rect x="0.6" y="0.6" width="15.3" height="15.3" rx="3.2" fill="#fff" stroke="#9a9a9a" stroke-width="1.2"/></svg><svg style="left:383.5px;top:787.12px" width="18" height="18" viewBox="0 0 18 18"><circle cx="9" cy="9" r="8.75" fill="#4a55e6"/><circle cx="10.3" cy="4.9" r="1.15" fill="#fff"/><path d="M8.3 7.8 H10.4 L8.7 13.1 Q8.6 13.7 9.2 13.6 L10.2 13.3" fill="none" stroke="#fff" stroke-width="1.35" stroke-linecap="round" stroke-linejoin="round"/></svg><svg style="left:418.5px;top:789.62px" width="21" height="13" viewBox="0 0 21 13"><path d="M1 0.9 H19.2 L16.6 6.3 L19.2 11.7 H1 Z" fill="none" stroke="#5c5c5c" stroke-width="1.6" stroke-linejoin="round"/></svg><div class="t" style="top:788.03px;font-size:17.5px;color:#1c1c1c;letter-spacing:1.327px;left:470.80px;">09/23/2025</div><div class="t" style="top:788.03px;font-size:17.5px;color:#1c1c1c;letter-spacing:0.157px;left:592.60px;">Walgreens</div><div class="a" style="left:846.3px;top:780.83px;width:199px;height:30.6px;border-radius:15.3px;background:#f8df8b"></div><div class="t" style="top:788.03px;font-size:17.5px;color:#221f0e;letter-spacing:0.138px;left:858.80px;-webkit-text-stroke-width:0.4px;">This needs a category</div><div class="t" style="top:788.03px;font-size:17.5px;color:#1c1c1c;letter-spacing:0.958px;left:1310.70px;">Coffee</div><div class="t" style="top:788.03px;font-size:17.5px;color:#1c1c1c;letter-spacing:1.000px;left:auto;right:215.77px;">$63.66</div><svg style="left:1884.5px;top:789.325px" width="16" height="16" viewBox="0 0 16 16"><circle cx="8" cy="8" r="7.7" fill="#4b8a17"/><path d="M10.5 5.9 A3.1 3.1 0 1 0 10.5 10.1" fill="none" stroke="#fff" stroke-width="1.9"/></svg><div class="a" style="left:331px;top:864px;width:1589px;height:1px;background:#dfded7"></div><div class="a" style="left:331px;top:865px;width:1589px;height:1px;background:#efeee9"></div><svg style="left:350px;top:833.62px" width="16.5" height="16.5" viewBox="0 0 16.5 16.5"><rect x="0.6" y="0.6" width="15.3" height="15.3" rx="3.2" fill="#fff" stroke="#9a9a9a" stroke-width="1.2"/></svg><svg style="left:383.5px;top:832.88px" width="18" height="18" viewBox="0 0 18 18"><circle cx="9" cy="9" r="8.75" fill="#4a55e6"/><circle cx="10.3" cy="4.9" r="1.15" fill="#fff"/><path d="M8.3 7.8 H10.4 L8.7 13.1 Q8.6 13.7 9.2 13.6 L10.2 13.3" fill="none" stroke="#fff" stroke-width="1.35" stroke-linecap="round" stroke-linejoin="round"/></svg><svg style="left:418.5px;top:835.38px" width="21" height="13" viewBox="0 0 21 13"><path d="M1 0.9 H19.2 L16.6 6.3 L19.2 11.7 H1 Z" fill="none" stroke="#5c5c5c" stroke-width="1.6" stroke-linejoin="round"/></svg><div class="t" style="top:833.78px;font-size:17.5px;color:#1c1c1c;letter-spacing:1.327px;left:470.80px;">09/22/2025</div><div class="t" style="top:833.78px;font-size:17.5px;color:#1c1c1c;letter-spacing:0.400px;left:592.60px;">Google</div><div class="a" style="left:846.3px;top:826.58px;width:199px;height:30.6px;border-radius:15.3px;background:#f8df8b"></div><div class="t" style="top:833.78px;font-size:17.5px;color:#221f0e;letter-spacing:0.138px;left:858.80px;-webkit-text-stroke-width:0.4px;">This needs a category</div><div class="t" style="top:833.78px;font-size:17.5px;color:#1c1c1c;letter-spacing:0.459px;left:1310.70px;">Streaming</div><div class="t" style="top:833.78px;font-size:17.5px;color:#1c1c1c;letter-spacing:1.000px;left:auto;right:215.77px;">$9.15</div><svg style="left:1884.5px;top:835.075px" width="16" height="16" viewBox="0 0 16 16"><circle cx="8" cy="8" r="7.7" fill="#4b8a17"/><path d="M10.5 5.9 A3.1 3.1 0 1 0 10.5 10.1" fill="none" stroke="#fff" stroke-width="1.9"/></svg><div class="a" style="left:331px;top:910px;width:1589px;height:1px;background:#dfded7"></div><div class="a" style="left:331px;top:911px;width:1589px;height:1px;background:#efeee9"></div><svg style="left:350px;top:879.38px" width="16.5" height="16.5" viewBox="0 0 16.5 16.5"><rect x="0.6" y="0.6" width="15.3" height="15.3" rx="3.2" fill="#fff" stroke="#9a9a9a" stroke-width="1.2"/></svg><svg style="left:383.5px;top:878.62px" width="18" height="18" viewBox="0 0 18 18"><circle cx="9" cy="9" r="8.75" fill="#4a55e6"/><circle cx="10.3" cy="4.9" r="1.15" fill="#fff"/><path d="M8.3 7.8 H10.4 L8.7 13.1 Q8.6 13.7 9.2 13.6 L10.2 13.3" fill="none" stroke="#fff" stroke-width="1.35" stroke-linecap="round" stroke-linejoin="round"/></svg><svg style="left:418.5px;top:881.12px" width="21" height="13" viewBox="0 0 21 13"><path d="M1 0.9 H19.2 L16.6 6.3 L19.2 11.7 H1 Z" fill="none" stroke="#5c5c5c" stroke-width="1.6" stroke-linejoin="round"/></svg><div class="t" style="top:879.53px;font-size:17.5px;color:#1c1c1c;letter-spacing:0.894px;left:470.80px;">09/21/2025</div><div class="t" style="top:879.53px;font-size:17.5px;color:#1c1c1c;letter-spacing:0.825px;left:592.60px;">Spotify</div><div class="a" style="left:846.3px;top:872.33px;width:199px;height:30.6px;border-radius:15.3px;background:#f8df8b"></div><div class="t" style="top:879.53px;font-size:17.5px;color:#221f0e;letter-spacing:0.138px;left:858.80px;-webkit-text-stroke-width:0.4px;">This needs a category</div><div class="t" style="top:879.53px;font-size:17.5px;color:#1c1c1c;letter-spacing:1.013px;left:1310.70px;">Gift</div><div class="t" style="top:879.53px;font-size:17.5px;color:#1c1c1c;letter-spacing:1.000px;left:auto;right:215.77px;">$91.58</div><svg style="left:1884.5px;top:880.825px" width="16" height="16" viewBox="0 0 16 16"><circle cx="8" cy="8" r="7.7" fill="#4b8a17"/><path d="M10.5 5.9 A3.1 3.1 0 1 0 10.5 10.1" fill="none" stroke="#fff" stroke-width="1.9"/></svg><div class="a" style="left:331px;top:956px;width:1589px;height:1px;background:#dfded7"></div><div class="a" style="left:331px;top:957px;width:1589px;height:1px;background:#efeee9"></div><svg style="left:350px;top:925.12px" width="16.5" height="16.5" viewBox="0 0 16.5 16.5"><rect x="0.6" y="0.6" width="15.3" height="15.3" rx="3.2" fill="#fff" stroke="#9a9a9a" stroke-width="1.2"/></svg><svg style="left:383.5px;top:924.38px" width="18" height="18" viewBox="0 0 18 18"><circle cx="9" cy="9" r="8.75" fill="#4a55e6"/><circle cx="10.3" cy="4.9" r="1.15" fill="#fff"/><path d="M8.3 7.8 H10.4 L8.7 13.1 Q8.6 13.7 9.2 13.6 L10.2 13.3" fill="none" stroke="#fff" stroke-width="1.35" stroke-linecap="round" stroke-linejoin="round"/></svg><svg style="left:418.5px;top:926.88px" width="21" height="13" viewBox="0 0 21 13"><path d="M1 0.9 H19.2 L16.6 6.3 L19.2 11.7 H1 Z" fill="none" stroke="#5c5c5c" stroke-width="1.6" stroke-linejoin="round"/></svg><div class="t" style="top:925.28px;font-size:17.5px;color:#1c1c1c;letter-spacing:1.327px;left:470.80px;">09/20/2025</div><div class="t" style="top:925.28px;font-size:17.5px;color:#1c1c1c;letter-spacing:0.763px;left:592.60px;">Venmo</div><div class="a" style="left:846.3px;top:918.08px;width:199px;height:30.6px;border-radius:15.3px;background:#f8df8b"></div><div class="t" style="top:925.28px;font-size:17.5px;color:#221f0e;letter-spacing:0.138px;left:858.80px;-webkit-text-stroke-width:0.4px;">This needs a category</div><div class="t" style="top:925.28px;font-size:17.5px;color:#1c1c1c;letter-spacing:0.958px;left:1310.70px;">Coffee</div><div class="t" style="top:925.28px;font-size:17.5px;color:#1c1c1c;letter-spacing:1.000px;left:auto;right:215.77px;">$121.49</div><svg style="left:1884.5px;top:926.575px" width="16" height="16" viewBox="0 0 16 16"><circle cx="8" cy="8" r="7.7" fill="#4b8a17"/><path d="M10.5 5.9 A3.1 3.1 0 1 0 10.5 10.1" fill="none" stroke="#fff" stroke-width="1.9"/></svg><div class="a" style="left:331px;top:1002px;width:1589px;height:1px;background:#dfded7"></div><div class="a" style="left:331px;top:1003px;width:1589px;height:1px;background:#efeee9"></div><svg style="left:350px;top:970.88px" width="16.5" height="16.5" viewBox="0 0 16.5 16.5"><rect x="0.6" y="0.6" width="15.3" height="15.3" rx="3.2" fill="#fff" stroke="#9a9a9a" stroke-width="1.2"/></svg><svg style="left:383.5px;top:970.12px" width="18" height="18" viewBox="0 0 18 18"><circle cx="9" cy="9" r="8.75" fill="#4a55e6"/><circle cx="10.3" cy="4.9" r="1.15" fill="#fff"/><path d="M8.3 7.8 H10.4 L8.7 13.1 Q8.6 13.7 9.2 13.6 L10.2 13.3" fill="none" stroke="#fff" stroke-width="1.35" stroke-linecap="round" stroke-linejoin="round"/></svg><svg style="left:418.5px;top:972.62px" width="21" height="13" viewBox="0 0 21 13"><path d="M1 0.9 H19.2 L16.6 6.3 L19.2 11.7 H1 Z" fill="none" stroke="#5c5c5c" stroke-width="1.6" stroke-linejoin="round"/></svg><div class="t" style="top:971.03px;font-size:17.5px;color:#1c1c1c;letter-spacing:0.894px;left:470.80px;">09/19/2025</div><div class="t" style="top:971.03px;font-size:17.5px;color:#1c1c1c;letter-spacing:0.704px;left:592.60px;">Chipotle</div><div class="a" style="left:846.3px;top:963.83px;width:199px;height:30.6px;border-radius:15.3px;background:#f8df8b"></div><div class="t" style="top:971.03px;font-size:17.5px;color:#221f0e;letter-spacing:0.138px;left:858.80px;-webkit-text-stroke-width:0.4px;">This needs a category</div><div class="t" style="top:971.03px;font-size:17.5px;color:#1c1c1c;letter-spacing:0.459px;left:1310.70px;">Streaming</div><div class="t" style="top:971.03px;font-size:17.5px;color:#1c1c1c;letter-spacing:1.000px;left:auto;right:57.77px;">$150.00</div><svg style="left:1884.5px;top:972.325px" width="16" height="16" viewBox="0 0 16 16"><circle cx="8" cy="8" r="7.7" fill="#4b8a17"/><path d="M10.5 5.9 A3.1 3.1 0 1 0 10.5 10.1" fill="none" stroke="#fff" stroke-width="1.9"/></svg><div class="a" style="left:331px;top:1047px;width:1589px;height:1px;background:#dfded7"></div><div class="a" style="left:331px;top:1048px;width:1589px;height:1px;background:#efeee9"></div><svg style="left:350px;top:1016.62px" width="16.5" height="16.5" viewBox="0 0 16.5 16.5"><rect x="0.6" y="0.6" width="15.3" height="15.3" rx="3.2" fill="#fff" stroke="#9a9a9a" stroke-width="1.2"/></svg><svg style="left:383.5px;top:1015.88px" width="18" height="18" viewBox="0 0 18 18"><circle cx="9" cy="9" r="8.75" fill="#4a55e6"/><circle cx="10.3" cy="4.9" r="1.15" fill="#fff"/><path d="M8.3 7.8 H10.4 L8.7 13.1 Q8.6 13.7 9.2 13.6 L10.2 13.3" fill="none" stroke="#fff" stroke-width="1.35" stroke-linecap="round" stroke-linejoin="round"/></svg><svg style="left:418.5px;top:1018.38px" width="21" height="13" viewBox="0 0 21 13"><path d="M1 0.9 H19.2 L16.6 6.3 L19.2 11.7 H1 Z" fill="none" stroke="#5c5c5c" stroke-width="1.6" stroke-linejoin="round"/></svg><div class="t" style="top:1016.78px;font-size:17.5px;color:#1c1c1c;letter-spacing:0.894px;left:470.80px;">09/18/2025</div><div class="t" style="top:1016.78px;font-size:17.5px;color:#1c1c1c;letter-spacing:0.704px;left:592.60px;">Chipotle</div><div class="a" style="left:846.3px;top:1009.58px;width:199px;height:30.6px;border-radius:15.3px;background:#f8df8b"></div><div class="t" style="top:1016.78px;font-size:17.5px;color:#221f0e;letter-spacing:0.138px;left:858.80px;-webkit-text-stroke-width:0.4px;">This needs a category</div><div class="t" style="top:1016.78px;font-size:17.5px;color:#1c1c1c;letter-spacing:0.187px;left:1310.70px;">Groceries</div><div class="t" style="top:1016.78px;font-size:17.5px;color:#1c1c1c;letter-spacing:1.000px;left:auto;right:215.77px;">$9.61</div><svg style="left:1884.5px;top:1018.075px" width="16" height="16" viewBox="0 0 16 16"><circle cx="8" cy="8" r="7.7" fill="#4b8a17"/><path d="M10.5 5.9 A3.1 3.1 0 1 0 10.5 10.1" fill="none" stroke="#fff" stroke-width="1.9"/></svg><div class="a" style="left:331px;top:1093px;width:1589px;height:1px;background:#dfded7"></div><div class="a" style="left:331px;top:1094px;width:1589px;height:1px;background:#efeee9"></div><svg style="left:350px;top:1062.38px" width="16.5" height="16.5" viewBox="0 0 16.5 16.5"><rect x="0.6" y="0.6" width="15.3" height="15.3" rx="3.2" fill="#fff" stroke="#9a9a9a" stroke-width="1.2"/></svg><svg style="left:383.5px;top:1061.62px" width="18" height="18" viewBox="0 0 18 18"><circle cx="9" cy="9" r="8.75" fill="#4a55e6"/><circle cx="10.3" cy="4.9" r="1.15" fill="#fff"/><path d="M8.3 7.8 H10.4 L8.7 13.1 Q8.6 13.7 9.2 13.6 L10.2 13.3" fill="none" stroke="#fff" stroke-width="1.35" stroke-linecap="round" stroke-linejoin="round"/></svg><svg style="left:418.5px;top:1064.12px" width="21" height="13" viewBox="0 0 21 13"><path d="M1 0.9 H19.2 L16.6 6.3 L19.2 11.7 H1 Z" fill="none" stroke="#5c5c5c" stroke-width="1.6" stroke-linejoin="round"/></svg><div class="t" style="top:1062.53px;font-size:17.5px;color:#1c1c1c;letter-spacing:0.894px;left:470.80px;">09/17/2025</div><div class="t" style="top:1062.53px;font-size:17.5px;color:#1c1c1c;letter-spacing:0.387px;left:592.60px;">Amazon</div><div class="a" style="left:846.3px;top:1055.33px;width:199px;height:30.6px;border-radius:15.3px;background:#f8df8b"></div><div class="t" style="top:1062.53px;font-size:17.5px;color:#221f0e;letter-spacing:0.138px;left:858.80px;-webkit-text-stroke-width:0.4px;">This needs a category</div><div class="t" style="top:1062.53px;font-size:17.5px;color:#1c1c1c;letter-spacing:0.576px;left:1310.70px;">Subscription</div><div class="t" style="top:1062.53px;font-size:17.5px;color:#1c1c1c;letter-spacing:1.000px;left:auto;right:57.77px;">$100.00</div><svg style="left:1884.5px;top:1063.825px" width="16" height="16" viewBox="0 0 16 16"><circle cx="8" cy="8" r="7.7" fill="#4b8a17"/><path d="M10.5 5.9 A3.1 3.1 0 1 0 10.5 10.1" fill="none" stroke="#fff" stroke-width="1.9"/></svg><div class="a" style="left:331px;top:1139px;width:1589px;height:1px;background:#dfded7"></div><div class="a" style="left:331px;top:1140px;width:1589px;height:1px;background:#efeee9"></div><svg style="left:350px;top:1108.12px" width="16.5" height="16.5" viewBox="0 0 16.5 16.5"><rect x="0.6" y="0.6" width="15.3" height="15.3" rx="3.2" fill="#fff" stroke="#9a9a9a" stroke-width="1.2"/></svg><svg style="left:383.5px;top:1107.38px" width="18" height="18" viewBox="0 0 18 18"><circle cx="9" cy="9" r="8.75" fill="#4a55e6"/><circle cx="10.3" cy="4.9" r="1.15" fill="#fff"/><path d="M8.3 7.8 H10.4 L8.7 13.1 Q8.6 13.7 9.2 13.6 L10.2 13.3" fill="none" stroke="#fff" stroke-width="1.35" stroke-linecap="round" stroke-linejoin="round"/></svg><svg style="left:418.5px;top:1109.88px" width="21" height="13" viewBox="0 0 21 13"><path d="M1 0.9 H19.2 L16.6 6.3 L19.2 11.7 H1 Z" fill="none" stroke="#5c5c5c" stroke-width="1.6" stroke-linejoin="round"/></svg><div class="t" style="top:1108.28px;font-size:17.5px;color:#1c1c1c;letter-spacing:0.894px;left:470.80px;">09/16/2025</div><div class="t" style="top:1108.28px;font-size:17.5px;color:#1c1c1c;letter-spacing:0.429px;left:592.60px;">Walmart</div><div class="a" style="left:846.3px;top:1101.08px;width:199px;height:30.6px;border-radius:15.3px;background:#f8df8b"></div><div class="t" style="top:1108.28px;font-size:17.5px;color:#221f0e;letter-spacing:0.138px;left:858.80px;-webkit-text-stroke-width:0.4px;">This needs a category</div><div class="t" style="top:1108.28px;font-size:17.5px;color:#1c1c1c;letter-spacing:1.000px;left:auto;right:216.77px;">$92.40</div><svg style="left:1884.5px;top:1109.575px" width="16" height="16" viewBox="0 0 16 16"><circle cx="8" cy="8" r="7.7" fill="#4b8a17"/><path d="M10.5 5.9 A3.1 3.1 0 1 0 10.5 10.1" fill="none" stroke="#fff" stroke-width="1.9"/></svg><div class="a" style="left:331px;top:1184px;width:1589px;height:1px;background:#dfded7"></div><div class="a" style="left:331px;top:1185px;width:1589px;height:1px;background:#efeee9"></div><svg style="left:350px;top:1153.88px" width="16.5" height="16.5" viewBox="0 0 16.5 16.5"><rect x="0.6" y="0.6" width="15.3" height="15.3" rx="3.2" fill="#fff" stroke="#9a9a9a" stroke-width="1.2"/></svg><svg style="left:383.5px;top:1153.12px" width="18" height="18" viewBox="0 0 18 18"><circle cx="9" cy="9" r="8.75" fill="#4a55e6"/><circle cx="10.3" cy="4.9" r="1.15" fill="#fff"/><path d="M8.3 7.8 H10.4 L8.7 13.1 Q8.6 13.7 9.2 13.6 L10.2 13.3" fill="none" stroke="#fff" stroke-width="1.35" stroke-linecap="round" stroke-linejoin="round"/></svg><svg style="left:418.5px;top:1155.62px" width="21" height="13" viewBox="0 0 21 13"><path d="M1 0.9 H19.2 L16.6 6.3 L19.2 11.7 H1 Z" fill="none" stroke="#5c5c5c" stroke-width="1.6" stroke-linejoin="round"/></svg><div class="t" style="top:1154.03px;font-size:17.5px;color:#1c1c1c;letter-spacing:0.894px;left:470.80px;">09/15/2025</div><div class="t" style="top:1154.03px;font-size:17.5px;color:#1c1c1c;letter-spacing:0.499px;left:591.60px;">Uber</div><div class="a" style="left:846.3px;top:1146.83px;width:199px;height:30.6px;border-radius:15.3px;background:#f8df8b"></div><div class="t" style="top:1154.03px;font-size:17.5px;color:#221f0e;letter-spacing:0.138px;left:858.80px;-webkit-text-stroke-width:0.4px;">This needs a category</div><div class="t" style="top:1154.03px;font-size:17.5px;color:#1c1c1c;letter-spacing:0.457px;left:1310.70px;">Transportation</div><div class="t" style="top:1154.03px;font-size:17.5px;color:#1c1c1c;letter-spacing:1.000px;left:auto;right:215.77px;">$86.42</div><svg style="left:1884.5px;top:1155.325px" width="16" height="16" viewBox="0 0 16 16"><circle cx="8" cy="8" r="7.7" fill="#4b8a17"/><path d="M10.5 5.9 A3.1 3.1 0 1 0 10.5 10.1" fill="none" stroke="#fff" stroke-width="1.9"/></svg><div class="a" style="left:331px;top:1230px;width:1589px;height:1px;background:#dfded7"></div><div class="a" style="left:331px;top:1231px;width:1589px;height:1px;background:#efeee9"></div><svg style="left:350px;top:1199.62px" width="16.5" height="16.5" viewBox="0 0 16.5 16.5"><rect x="0.6" y="0.6" width="15.3" height="15.3" rx="3.2" fill="#fff" stroke="#9a9a9a" stroke-width="1.2"/></svg><svg style="left:383.5px;top:1198.88px" width="18" height="18" viewBox="0 0 18 18"><circle cx="9" cy="9" r="8.75" fill="#4a55e6"/><circle cx="10.3" cy="4.9" r="1.15" fill="#fff"/><path d="M8.3 7.8 H10.4 L8.7 13.1 Q8.6 13.7 9.2 13.6 L10.2 13.3" fill="none" stroke="#fff" stroke-width="1.35" stroke-linecap="round" stroke-linejoin="round"/></svg><svg style="left:418.5px;top:1201.38px" width="21" height="13" viewBox="0 0 21 13"><path d="M1 0.9 H19.2 L16.6 6.3 L19.2 11.7 H1 Z" fill="none" stroke="#5c5c5c" stroke-width="1.6" stroke-linejoin="round"/></svg><div class="a" style="left:846.3px;top:1192.58px;width:199px;height:30.6px;border-radius:15.3px;background:#f8df8b"></div><svg style="left:1884.5px;top:1201.075px" width="16" height="16" viewBox="0 0 16 16"><circle cx="8" cy="8" r="7.7" fill="#4b8a17"/><path d="M10.5 5.9 A3.1 3.1 0 1 0 10.5 10.1" fill="none" stroke="#fff" stroke-width="1.9"/></svg><div class="a" style="left:799px;top:1078.3px;width:652px;height:60px;border-radius:14px;background:#1e1f56;box-shadow:0 3px 10px rgba(0,0,0,0.2)"></div><svg style="left:819px;top:1103.5px" width="10" height="10" viewBox="0 0 10 10"><path d="M1 1L9 9M9 1L1 9" stroke="#dcdcf0" stroke-width="1.3"/></svg><div class="t" style="top:1100.04px;font-size:18.5px;color:#fff;letter-spacing:-0.469px;left:840.00px;">3 Transactions</div><div class="a" style="left:975px;top:1098px;width:1.5px;height:20px;background:#8b8cb8"></div><svg style="left:996.5px;top:1100px" width="16" height="16" viewBox="0 0 16 16"><circle cx="8" cy="8" r="7.6" fill="#fff"/><polyline points="4.4,8.2 6.9,10.6 11.5,5.6" fill="none" stroke="#1e1f56" stroke-width="1.6"/></svg><div class="t" style="top:1100.04px;font-size:18.5px;color:#fff;letter-spacing:-0.186px;left:1022.40px;">Approve</div><svg style="left:1110.5px;top:1100px" width="16" height="16" viewBox="0 0 16 16"><circle cx="8" cy="8" r="7.6" fill="#fff"/><path d="M5.6 5.6L10.4 10.4M10.4 5.6L5.6 10.4" stroke="#1e1f56" stroke-width="1.6"/></svg><div class="t" style="top:1100.04px;font-size:18.5px;color:#fff;letter-spacing:-0.040px;left:1135.50px;">Reject</div><svg style="left:1209.5px;top:1102px" width="14" height="13" viewBox="0 0 14 13"><rect x="0.9" y="0.9" width="12.2" height="11.2" rx="2" fill="none" stroke="#fff" stroke-width="1.6"/><path d="M0.9 7.6 H4.2 L5.2 9.2 H8.8 L9.8 7.6 H13.1 V10.5 Q13.1 12.1 11.5 12.1 H2.5 Q0.9 12.1 0.9 10.5 Z" fill="#fff"/><polyline points="4.6,4.2 6.4,6 9.6,2.8" fill="none" stroke="#fff" stroke-width="1.5"/></svg><div class="t" style="top:1100.04px;font-size:18.5px;color:#fff;letter-spacing:-0.108px;left:1233.90px;">Categorize</div><div class="a" style="left:1343px;top:1098px;width:1.5px;height:20px;background:#8b8cb8"></div><svg style="left:1364px;top:1105.5px" width="16" height="5" viewBox="0 0 16 5"><circle cx="2" cy="2.5" r="1.7" fill="#fff"/><circle cx="8" cy="2.5" r="1.7" fill="#fff"/><circle cx="14" cy="2.5" r="1.7" fill="#fff"/></svg><div class="t" style="top:1100.04px;font-size:18.5px;color:#fff;letter-spacing:0.013px;left:1388.90px;">More</div><div class="a" style="left:1812px;top:1098.5px;width:50.5px;height:50.5px;border-radius:50%;background:#6a6966"></div><svg style="left:1822px;top:1108px" width="30" height="32" viewBox="0 0 30 32"><path d="M9.2 9.6 Q9.2 3.6 15.2 3.6 Q21.2 3.6 21.2 9.4 Q21.2 12.6 18.2 14.6 Q15.6 16.3 15.6 19.9" fill="none" stroke="#fff" stroke-width="4.4" stroke-linecap="round"/><circle cx="15.6" cy="27.6" r="2.7" fill="#fff"/></svg>
</div></body></html>
